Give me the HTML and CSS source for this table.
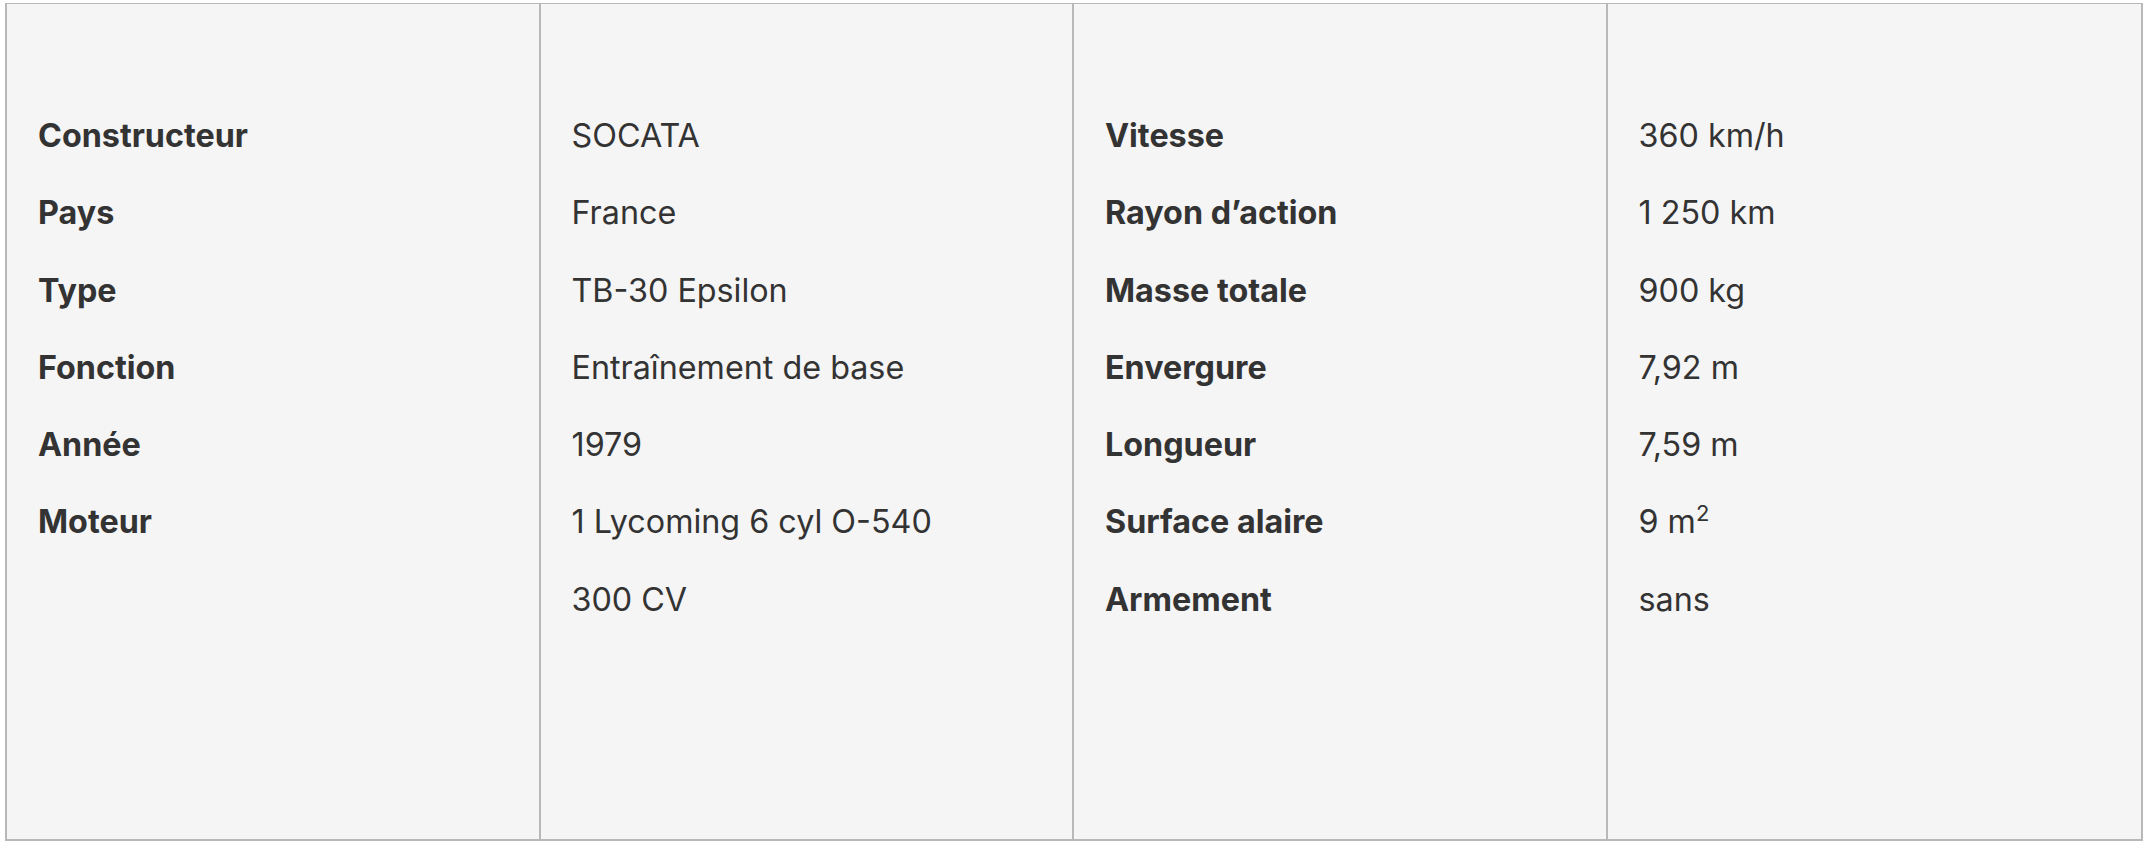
FILE: index.html
```html
<!DOCTYPE html>
<html lang="fr">
<head>
<meta charset="utf-8">
<title>TB-30 Epsilon</title>
<link rel="stylesheet" href="styles.css">
</head>
<body>
<div class="page">
  <div class="specs">
    <div class="col labels">
      <div class="cell">Constructeur</div>
      <div class="cell">Pays</div>
      <div class="cell">Type</div>
      <div class="cell">Fonction</div>
      <div class="cell">Année</div>
      <div class="cell">Moteur</div>
    </div>
    <div class="col values">
      <div class="cell">SOCATA</div>
      <div class="cell">France</div>
      <div class="cell">TB-30 Epsilon</div>
      <div class="cell">Entraînement de base</div>
      <div class="cell">1979</div>
      <div class="cell">1 Lycoming 6 cyl O-540</div>
      <div class="cell">300 CV</div>
    </div>
    <div class="col labels">
      <div class="cell">Vitesse</div>
      <div class="cell">Rayon d’action</div>
      <div class="cell">Masse totale</div>
      <div class="cell">Envergure</div>
      <div class="cell">Longueur</div>
      <div class="cell">Surface alaire</div>
      <div class="cell">Armement</div>
    </div>
    <div class="col values">
      <div class="cell">360 km/h</div>
      <div class="cell">1 250 km</div>
      <div class="cell">900 kg</div>
      <div class="cell">7,92 m</div>
      <div class="cell">7,59 m</div>
      <div class="cell">9 m<sup class="sup">2</sup></div>
      <div class="cell">sans</div>
    </div>
  </div>
</div>
</body>
</html>
```

FILE: styles.css
```css
html, body {
  margin: 0;
  padding: 0;
  background: #ffffff;
}

.page {
  padding: 3px 7px 9px 5px;
}

.specs {
  display: grid;
  grid-template-columns: repeat(4, 1fr);
  height: 838px;
  box-sizing: border-box;
  background: #f5f5f5;
  border: 2px solid #b8b8b8;
  border-top-width: 1px;
  font-family: Inter, "Liberation Sans", sans-serif;
  font-size: 32.3px;
  color: #333333;
}

.col {
  padding: 93px 30px 0 31px;
}

.col:not(:last-child) {
  border-right: 2px solid #b8b8b8;
}

.cell {
  line-height: 77.25px;
  height: 77.25px;
  white-space: nowrap;
}

.labels .cell {
  font-weight: 700;
}

.values .cell {
  font-weight: 400;
}

.sup {
  font-size: 22px;
  line-height: 0;
  vertical-align: 12px;
}
```
